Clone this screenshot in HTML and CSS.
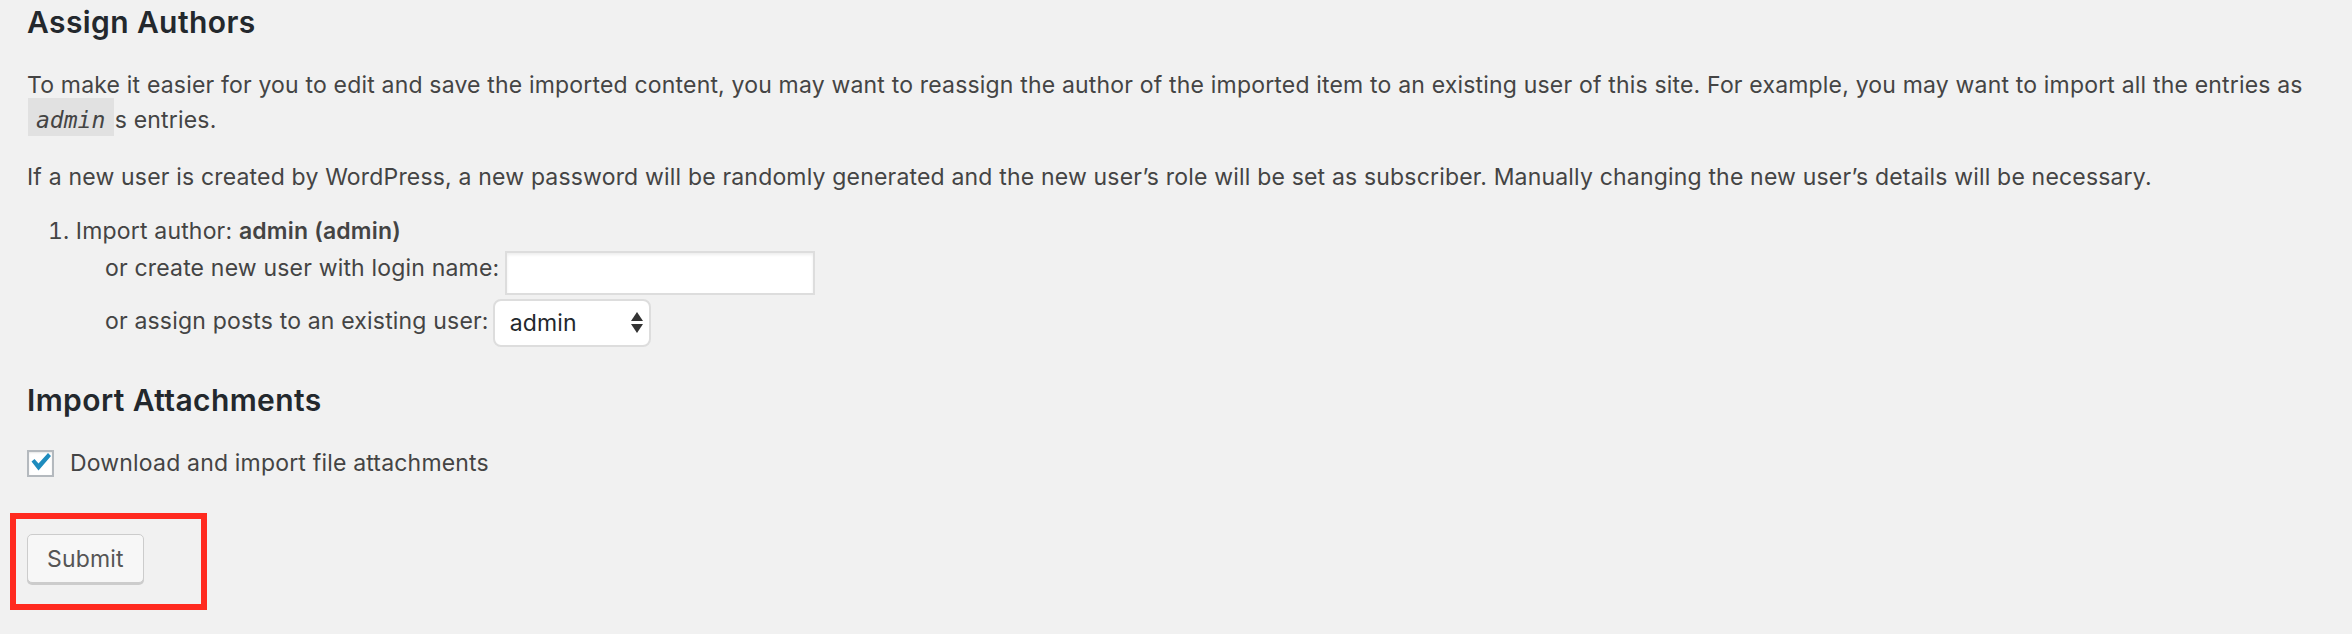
FILE: index.html
```html
<!DOCTYPE html>
<html lang="en">
<head>
<meta charset="utf-8">
<title>Import WordPress</title>
<link rel="stylesheet" href="styles.css">
</head>
<body>
<form class="wrap">
  <h2 class="title">Assign Authors</h2>
  <p class="para p1">To make it easier for you to edit and save the imported content, you may want to reassign the author of the imported item to an existing user of this site. For example, you may want to import all the entries as <code>admin</code>s entries.</p>
  <p class="para p2">If a new user is created by WordPress, a new password will be randomly generated and the new user’s role will be set as subscriber. Manually changing the new user’s details will be necessary.</p>
  <ol class="authors">
    <li>Import author: <strong>admin (admin)</strong>
      <div class="opt opt-new">
        <label class="opt-label" for="new-user">or create new user with login name:</label>
        <input class="text-input" id="new-user" type="text">
      </div>
      <div class="opt opt-assign">
        <label class="opt-label" for="user-map">or assign posts to an existing user:</label>
        <span class="select-wrap">
          <select class="user-select" id="user-map"><option>admin</option></select>
          <svg class="select-arrows" width="12" height="22" viewBox="0 0 12 22" aria-hidden="true">
            <path d="M6 0 L12 9 L0 9 Z" fill="#333"/>
            <path d="M0 12 L12 12 L6 21 Z" fill="#333"/>
          </svg>
        </span>
      </div>
    </li>
  </ol>
  <h2 class="title t2">Import Attachments</h2>
  <div class="check-row">
    <span class="cb">
      <input class="cb-input" type="checkbox" id="attachments" checked>
      <svg class="cb-mark" width="27" height="27" viewBox="0 0 27 27" aria-hidden="true">
        <path d="M4.5 11.5 L7.5 9 L11.5 13.5 L21 3 L24 6 L11.5 20.5 Z" fill="#1e8cbe"/>
      </svg>
    </span>
    <label class="cb-label" for="attachments">Download and import file attachments</label>
  </div>
  <div class="highlight">
    <button class="button" type="button">Submit</button>
  </div>
</form>
</body>
</html>
```

FILE: styles.css
```css
html, body {
  margin: 0;
  padding: 0;
  background: #f1f1f1;
}

body {
  font-family: Inter, "Noto Sans", "Liberation Sans", sans-serif;
  font-size: 23px;
  letter-spacing: 0.18px;
  color: #444;
}

.wrap {
  padding: 2px 16px 0 27px;
  margin: 0;
}

.title {
  margin: 0;
  font-size: 30px;
  line-height: 40px;
  font-weight: 600;
  letter-spacing: 0.4px;
  color: #23282d;
}

.t2 {
  margin-top: 32.8px;
}

.para {
  margin: 0;
  line-height: 34.5px;
}

.p1 {
  margin-top: 26px;
}

.p2 {
  margin-top: 23.4px;
}

code {
  font-family: "DejaVu Sans Mono", "Liberation Mono", monospace;
  font-style: italic;
  font-size: 23px;
  letter-spacing: 0;
  background: #e1e1e1;
  padding: 8.5px 8.5px 3.8px 8px;
  margin: 0 1px;
  color: #444;
}

.authors {
  margin: 18.8px 0 0 0;
  padding: 0 0 0 21px;
  list-style: decimal inside;
  line-height: 34.5px;
}

.authors strong {
  font-weight: 600;
}

.opt {
  display: flex;
  align-items: flex-start;
  margin-left: 57px;
}

.opt-label {
  line-height: 34.5px;
  margin-right: 6px;
}

.opt-new {
  margin-top: 2.7px;
}

.opt-new .opt-label {
  margin-top: 0.5px;
}

.opt-assign {
  margin-top: 4px;
}

.opt-assign .opt-label {
  margin-top: 5px;
  margin-right: 4px;
}

.text-input {
  box-sizing: border-box;
  width: 310px;
  height: 44px;
  margin: 0;
  border: 2px solid #dddddd;
  background: #fff;
  box-shadow: inset 0 2px 3px rgba(0, 0, 0, 0.07);
  font: inherit;
}

.select-wrap {
  position: relative;
  display: block;
}

.user-select {
  -webkit-appearance: none;
  appearance: none;
  box-sizing: border-box;
  width: 158px;
  height: 48px;
  margin: 0;
  padding: 0 0 0 15px;
  border: 2px solid #dddddd;
  border-radius: 8px;
  background: #fff;
  font-family: Inter, "Noto Sans", "Liberation Sans", sans-serif;
  font-size: 23px;
  letter-spacing: 0.18px;
  color: #23282d;
}

.select-arrows {
  position: absolute;
  left: 138px;
  top: 13px;
  pointer-events: none;
}

.check-row {
  display: flex;
  align-items: flex-start;
  margin-top: 26px;
}

.cb {
  position: relative;
  display: block;
  width: 27px;
  height: 27px;
  margin-top: 4.2px;
  margin-right: 16px;
}

.cb-input {
  -webkit-appearance: none;
  appearance: none;
  box-sizing: border-box;
  display: block;
  width: 27px;
  height: 27px;
  margin: 0;
  border: 2px solid #b4b9be;
  background: #fff;
  box-shadow: inset 0 1px 2px rgba(0, 0, 0, 0.1);
}

.cb-mark {
  position: absolute;
  left: 0;
  top: 0;
  pointer-events: none;
}

.cb-label {
  line-height: 34.5px;
}

.highlight {
  box-sizing: border-box;
  width: 197px;
  margin: 32.4px 0 0 -17px;
  padding: 15.3px 0 21px 11px;
  border: 6px solid #ff2a1f;
}

.button {
  display: block;
  box-sizing: border-box;
  height: 49px;
  margin: 0;
  padding: 1px 19px 0 19px;
  border: 1px solid #cccccc;
  border-radius: 5px;
  background: #f7f7f7;
  box-shadow: 0 2px 0 #cccccc;
  font-family: Inter, "Noto Sans", "Liberation Sans", sans-serif;
  font-size: 23px;
  letter-spacing: 0.18px;
  color: #555;
}
```
